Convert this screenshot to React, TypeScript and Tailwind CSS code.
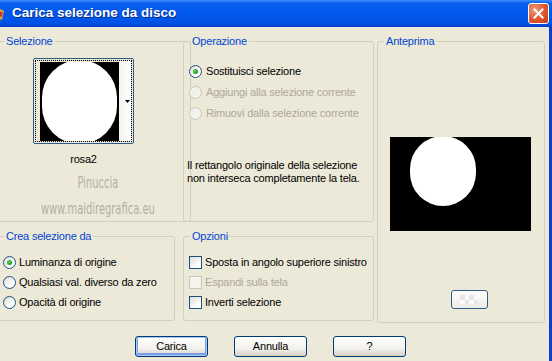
import React from "react";

function Radio({ checked = false, disabled = false }: { checked?: boolean; disabled?: boolean }) {
  return (
    <span
      className={
        "relative flex h-[13px] w-[13px] shrink-0 items-center justify-center rounded-full border " +
        (disabled
          ? "border-[#CAC8BB] bg-[#F2F1EC]"
          : "border-[#1C5180] bg-[linear-gradient(135deg,#DCDCD7,#FFFFFF_70%)]")
      }
    >
      {checked && (
        <span className="h-[5px] w-[5px] rounded-full bg-[radial-gradient(circle_at_35%_35%,#55D551,#21A121_60%,#1A8A1A)]" />
      )}
    </span>
  );
}

function Check({ disabled = false }: { disabled?: boolean }) {
  return (
    <span
      className={
        "h-[13px] w-[13px] shrink-0 border " +
        (disabled
          ? "border-[#CAC8BB] bg-[#F5F4EF]"
          : "border-[#1C5180] bg-[linear-gradient(135deg,#DCDCD7,#FFFFFF_75%)]")
      }
    />
  );
}

function Row({ children, label, disabled = false, gap = "gap-[4px]", h = "h-[20px]" }: { children: React.ReactNode; label: string; disabled?: boolean; gap?: string; h?: string }) {
  return (
    <div className={"flex items-center whitespace-nowrap " + h + " " + gap}>
      {children}
      <span className={disabled ? "text-[#ACA899]" : "text-black"}>{label}</span>
    </div>
  );
}

function Group({ title, className, children }: { title: string; className: string; children?: React.ReactNode }) {
  return (
    <fieldset className={"rounded-[3px] border border-[#D0D0BF] " + className}>
      <legend className="ml-[6px] px-[2px] leading-[13px] text-[#0046D5]">{title}</legend>
      {children}
    </fieldset>
  );
}

function XpButton({ label, isDefault = false }: { label: string; isDefault?: boolean }) {
  return (
    <button
      className={
        "flex h-[21px] w-[73px] items-center justify-center rounded-[3px] border border-[#003C74] bg-[linear-gradient(to_bottom,#FFFFFF,#F3F2EE_60%,#D6D0C5)] text-black " +
        (isDefault ? "shadow-[inset_0_0_0_1px_#A8C8F8,inset_0_-1px_0_2px_#7C9EEA]" : "")
      }
    >
      {label}
    </button>
  );
}

export default function App() {
  return (
    <div className="flex h-[361px] w-[552px] flex-col overflow-hidden bg-[#ECE9D8] font-['Liberation_Sans',Arial,sans-serif] text-[11px] tracking-[-0.2px]">
      {/* barra del titolo */}
      <div className="flex h-[27px] shrink-0 items-center bg-[linear-gradient(to_bottom,#3D8EF8_0px,#0A61EE_3px,#0058EE_45%,#0053E6_85%,#0042CB_100%)] pr-[3px]">
        <svg width="8" height="18" viewBox="0 0 8 18" className="-ml-[2px] mr-[6px]">
          <path d="M0 3 L6 6 L4 15 L0 13 Z" fill="#E8A33A" />
          <path d="M1 6 L5 7.5 L3.5 12 L1 11 Z" fill="#C0392B" />
          <path d="M0 14 L3 16 L0 18 Z" fill="#4A8F2F" />
        </svg>
        <span className="flex-1 text-[13.5px] font-bold tracking-normal text-white [text-shadow:1px_1px_0_#0A2A8A]">
          Carica selezione da disco
        </span>
        <div className="flex h-[21px] w-[21px] items-center justify-center rounded-[3px] border border-white bg-[radial-gradient(circle_at_30%_30%,#F09A7C,#E0552E_55%,#C23A14)]">
          <svg width="11" height="11" viewBox="0 0 11 11">
            <path d="M1.5 1.5 L9.5 9.5 M9.5 1.5 L1.5 9.5" stroke="white" strokeWidth="2" strokeLinecap="square" />
          </svg>
        </div>
      </div>

      <div className="flex flex-1 border-r-[3px] border-[#0A3FD4]">
        <div className="flex flex-1 flex-col">
          <div className="flex pt-[8px]">
            {/* colonna sinistra */}
            <div className="-ml-[3px] flex w-[178px] flex-col">
              <Group title="Selezione" className="h-[187px]">
                <div className="ml-[35px] mt-[10px] flex w-[101px] flex-col items-center">
                  <div className="flex h-[86px] w-[101px] rounded-[2px] border border-[#2E5C8A] p-[1px]">
                    <div className="flex flex-1 border border-dotted border-black">
                      <div className="ml-[4px] mt-[1px] flex h-[79px] w-[79px] items-center justify-center overflow-hidden bg-black">
                        <div className="h-[84px] w-[75px] shrink-0 rounded-full bg-white" />
                      </div>
                      <div className="flex flex-1 items-center justify-end bg-[linear-gradient(to_right,#F4F3EE,#FFFFFF)] pr-[1px]">
                        <svg width="5" height="3" viewBox="0 0 5 3">
                          <path d="M0 0 H5 L2.5 3 Z" fill="black" />
                        </svg>
                      </div>
                    </div>
                  </div>
                  <div className="mt-[9px] leading-[13px] text-black">rosa2</div>
                </div>
                <div className="mt-[6px] flex flex-col items-center pl-[8px] font-['DejaVu_Sans',sans-serif] tracking-normal text-[#B3B0A3]">
                  <span className="inline-block scale-x-[0.62] text-[16px] leading-[22px]">Pinuccia</span>
                  <span className="mt-[4px] inline-block scale-x-[0.62] whitespace-nowrap text-[16px] leading-[22px]">www.maidiregrafica.eu</span>
                </div>
              </Group>
              <Group title="Crea selezione da" className="mt-[8px] h-[91px]">
                <div className="ml-[5px] mt-[9px] flex flex-col">
                  <Row label="Luminanza di origine" gap="gap-[3px]"><Radio checked /></Row>
                  <Row label="Qualsiasi val. diverso da zero" gap="gap-[3px]"><Radio /></Row>
                  <Row label="Opacità di origine" gap="gap-[3px]"><Radio /></Row>
                </div>
              </Group>
            </div>

            {/* colonna centrale */}
            <div className="ml-[8px] flex w-[191px] flex-col">
              <Group title="Operazione" className="h-[187px]">
                <div className="ml-[5px] mt-[12px] flex flex-col">
                  <Row label="Sostituisci selezione" h="h-[22px]"><Radio checked /></Row>
                  <Row label="Aggiungi alla selezione corrente" disabled h="h-[21px]"><Radio disabled /></Row>
                  <Row label="Rimuovi dalla selezione corrente" disabled h="h-[21px]"><Radio disabled /></Row>
                </div>
                <p className="ml-[3px] mt-[35px] leading-[13px] text-black">
                  Il rettangolo originale della selezione
                  <br />
                  non interseca completamente la tela.
                </p>
              </Group>
              <Group title="Opzioni" className="mt-[8px] h-[91px]">
                <div className="ml-[5px] mt-[9px] flex flex-col">
                  <Row label="Sposta in angolo superiore sinistro" gap="gap-[3px]"><Check /></Row>
                  <Row label="Espandi sulla tela" disabled gap="gap-[3px]"><Check disabled /></Row>
                  <Row label="Inverti selezione" gap="gap-[3px]"><Check /></Row>
                </div>
              </Group>
            </div>

            {/* anteprima */}
            <div className="ml-[3px] flex w-[168px] flex-col">
              <Group title="Anteprima" className="flex h-[288px] flex-col items-center">
                <div className="mt-[89px] ml-[-2px] h-[94px] w-[141px] overflow-hidden bg-black">
                  <div className="ml-[20px] -mt-[1px] h-[70px] w-[66px] rounded-full bg-white" />
                </div>
                <div className="mt-[59px] ml-[16px] flex h-[19px] w-[37px] items-center justify-center rounded-[3px] border border-[#2E5C8A] bg-[linear-gradient(to_bottom,#FFFFFF,#ECEBE6)]">
                  <div className="grid h-[9px] w-[18px] grid-cols-4">
                    <span className="bg-[#E6E6E6]" />
                    <span className="bg-[#FAFAFA]" />
                    <span className="bg-[#E6E6E6]" />
                    <span className="bg-[#FAFAFA]" />
                    <span className="bg-[#FAFAFA]" />
                    <span className="bg-[#E6E6E6]" />
                    <span className="bg-[#FAFAFA]" />
                    <span className="bg-[#E6E6E6]" />
                  </div>
                </div>
              </Group>
            </div>
          </div>

          {/* pulsanti */}
          <div className="ml-[135px] mt-[13px] flex gap-[26px]">
            <XpButton label="Carica" isDefault />
            <XpButton label="Annulla" />
            <XpButton label="?" />
          </div>
        </div>
      </div>
    </div>
  );
}
